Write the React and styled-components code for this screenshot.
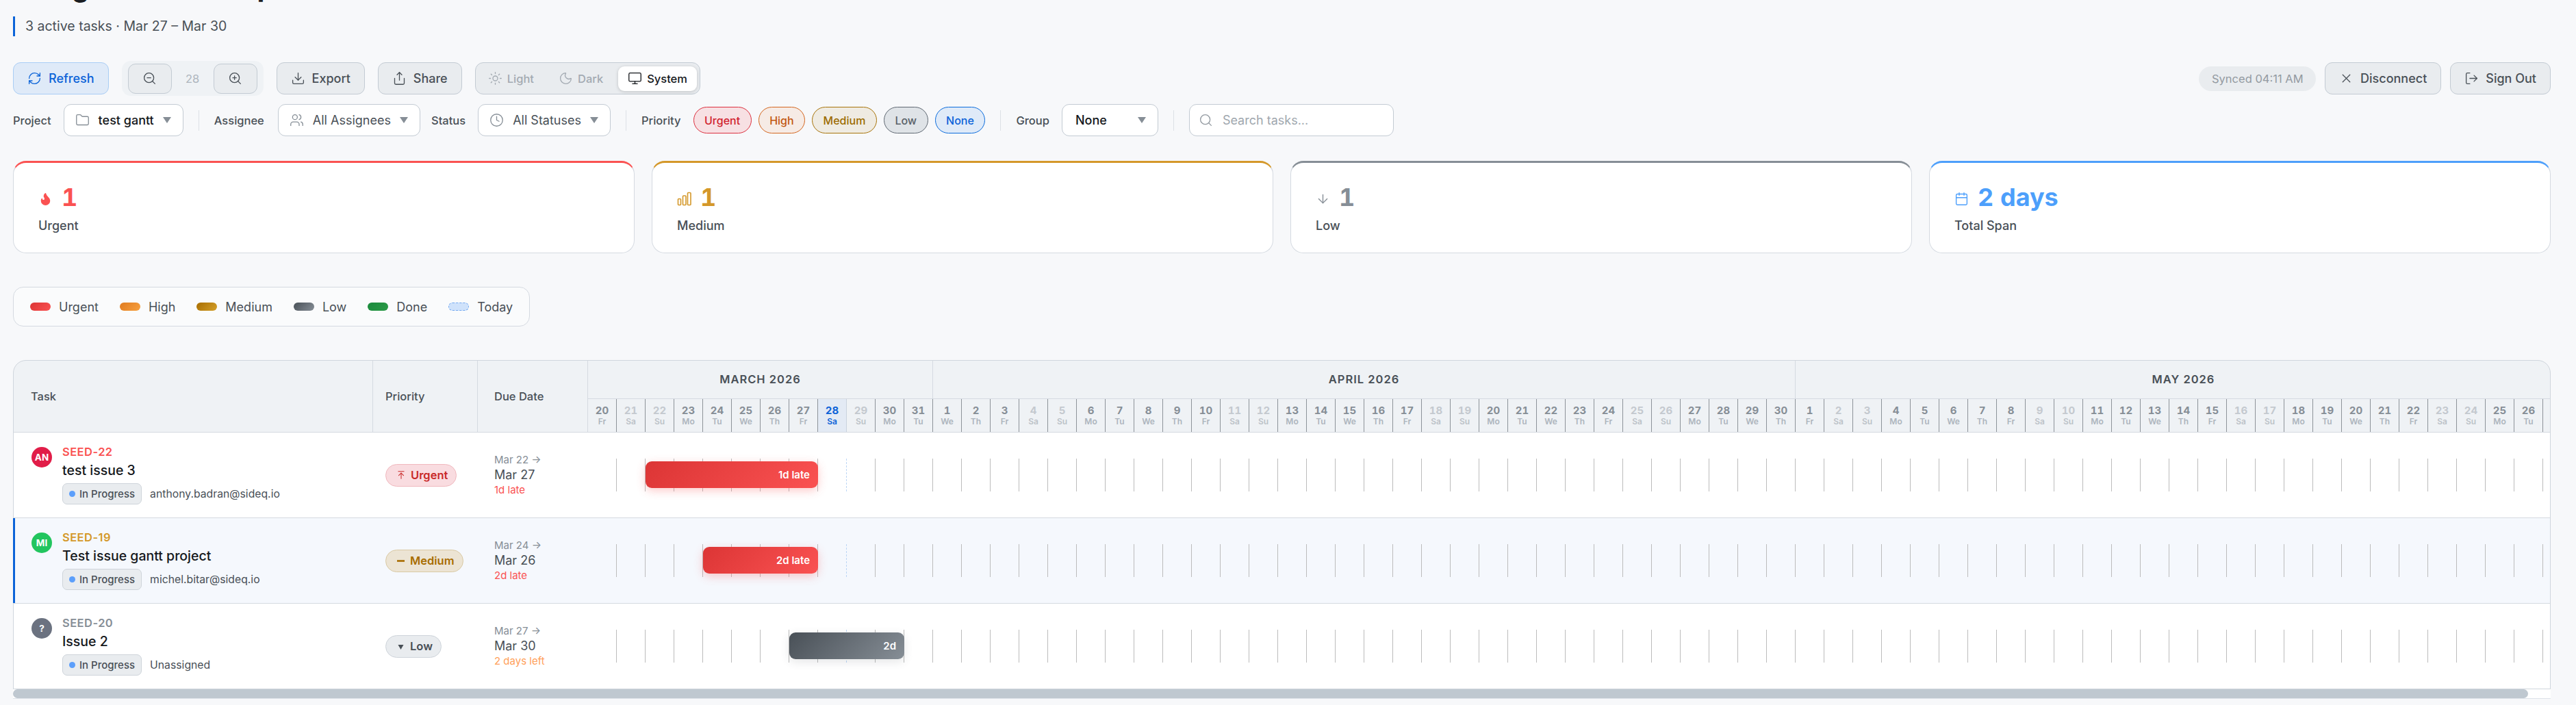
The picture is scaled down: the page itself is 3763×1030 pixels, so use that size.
import React from 'react';
import styled, { createGlobalStyle } from 'styled-components';
import {
  RefreshCw, ZoomIn, ZoomOut, Download, Share, Sun, Moon, Monitor, Folder, Users, Clock,
  Search, X, LogOut, Flame, ArrowDown, Calendar, ArrowUpToLine,
} from 'lucide-react';

const DAY_W = 42;

const Global = createGlobalStyle`
  html, body { margin: 0; padding: 0; overflow: hidden; height: 100%; background: #f7f8fa; }
  body { font-family: Inter, "Noto Sans", "Liberation Sans", sans-serif; color: #495057; }
  * { box-sizing: border-box; }
`;

const Page = styled.div`
  padding: 0 37px 0 19px;
`;
const Title = styled.h1`
  margin: -43px 0 19px;
  font-size: 40px;
  line-height: 48px;
  font-weight: 700;
  color: #1a1d21;
  white-space: nowrap;
`;
const Subtitle = styled.p`
  margin: 0;
  height: 29px;
  line-height: 29px;
  padding-left: 15px;
  border-left: 3px solid #0b63d8;
  font-size: 19.5px;
  color: #495057;
`;

const Toolbar = styled.div`
  display: flex;
  align-items: center;
  gap: 19px;
  height: 51px;
  margin-top: 36px;
`;
const Button = styled.button`
  display: inline-flex;
  align-items: center;
  gap: 10px;
  height: 47px;
  padding: 0 20px;
  font: 500 18px Inter, sans-serif;
  color: ${p => (p.$active ? '#0b63d8' : '#495057')};
  background: ${p => (p.$active ? '#dfeaf8' : '#e9ecef')};
  border: 1px solid ${p => (p.$active ? '#a9cdf5' : '#c3cbd3')};
  border-radius: 11px;
`;
const ZoomGroup = styled.div`
  display: flex;
  align-items: center;
  height: 51px;
  padding: 0 9px;
  background: #eff2f5;
  border-radius: 13px;
`;
const ZoomButton = styled.button`
  display: flex;
  align-items: center;
  justify-content: center;
  width: 64px;
  height: 44px;
  background: #e9ecef;
  border: 1px solid #c3cbd3;
  border-radius: 11px;
  color: #495057;
`;
const ZoomLevel = styled.span`
  width: 61px;
  text-align: center;
  font-size: 16.5px;
  color: #adb5bd;
`;
const ThemeGroup = styled.div`
  display: flex;
  align-items: center;
  gap: 8px;
  height: 47px;
  padding: 0 4px;
  background: #e9ecef;
  border: 1px solid #c3cbd3;
  border-radius: 12px;
`;
const ThemeItem = styled.div`
  display: flex;
  align-items: center;
  gap: 7px;
  height: 36px;
  padding: 0 14px;
  font-size: 16.5px;
  font-weight: 500;
  color: ${p => (p.$active ? '#15181c' : '#a3aab2')};
  background: ${p => (p.$active ? '#fff' : 'transparent')};
  border-radius: 9px;
  box-shadow: ${p => (p.$active ? '0 1px 5px rgba(0,0,0,.18)' : 'none')};
`;
const RightTools = styled.div`
  display: flex;
  align-items: center;
  gap: 13px;
  margin-left: auto;
`;
const SyncPill = styled.span`
  display: flex;
  align-items: center;
  height: 36px;
  padding: 0 18.5px;
  font-size: 16.5px;
  color: #939aa1;
  background: #e9ecef;
  border-radius: 18px;
`;

const FilterRow = styled.div`
  display: flex;
  align-items: center;
  height: 47px;
  margin-top: 12px;
`;
const FilterGroup = styled.div`
  display: flex;
  align-items: center;
  gap: ${p => p.$gap || 18}px;
  margin-left: ${p => p.$ml || 0}px;
`;
const FilterLabel = styled.span`
  font-size: 16.5px;
  font-weight: 450;
  color: #495057;
`;
const Select = styled.div`
  display: flex;
  align-items: center;
  gap: 13px;
  height: 47px;
  min-width: ${p => p.$minW || 0}px;
  padding: 0 17px 0 ${p => p.$pl || 16}px;
  font-size: 18px;
  font-weight: ${p => (p.$strong ? 500 : 400)};
  color: ${p => (p.$strong ? '#15181c' : '#495057')};
  background: #fff;
  border: 1px solid #c3cbd3;
  border-radius: 11px;
  svg { flex: none; color: #868e96; }
`;
const CaretMark = styled.svg`
  margin-left: auto;
`;
const Caret = () => (
  <CaretMark width="12" height="9" viewBox="0 0 12 9"><path d="M0 0h12L6 9z" fill="#868e96" /></CaretMark>
);
const Divider = styled.span`
  width: 1px;
  height: 30px;
  margin: 0 22px;
  background: #dde1e6;
`;
const FilterChips = styled.div`
  display: flex;
  gap: 10px;
`;
const FilterChip = styled.span`
  display: flex;
  align-items: center;
  height: 39px;
  padding: 0 15.5px;
  font-size: 16px;
  font-weight: 500;
  color: ${p => p.$fg};
  background: ${p => p.$bg};
  border: 1px solid ${p => p.$bd};
  border-radius: 20px;
`;
const SearchBox = styled.label`
  display: flex;
  align-items: center;
  gap: 14px;
  width: 299px;
  height: 47px;
  padding: 0 13px;
  background: #fff;
  border: 1px solid #c3cbd3;
  border-radius: 11px;
  color: #939aa1;
`;
const SearchInput = styled.input`
  flex: 1;
  min-width: 0;
  border: 0;
  outline: 0;
  padding: 0;
  background: transparent;
  font: 400 18px Inter, sans-serif;
  &::placeholder { color: #a0a7ae; opacity: 1; }
`;

const Stats = styled.div`
  display: grid;
  grid-template-columns: repeat(4, 1fr);
  gap: 25px;
  margin-top: 36px;
`;
const StatCard = styled.div`
  height: 135px;
  padding: 28px 36px 0;
  background: #fff;
  border: 1px solid #d5dae1;
  border-top: 3px solid ${p => p.$c};
  border-radius: 19px;
`;
const StatValue = styled.div`
  display: flex;
  align-items: center;
  gap: 13px;
  height: 44px;
  font-size: 36px;
  line-height: 44px;
  font-weight: 700;
  font-variant-numeric: tabular-nums;
  color: ${p => p.$c};
  svg { flex: none; margin-top: 5px; }
`;
const StatLabel = styled.div`
  margin-top: 8px;
  font-size: 18px;
  line-height: 24px;
  font-weight: 500;
  color: #495057;
`;

const Legend = styled.div`
  display: inline-flex;
  align-items: center;
  gap: 31px;
  height: 58px;
  margin-top: 49px;
  padding: 0 24px;
  background: #fafbfc;
  border: 1px solid #d5dae1;
  border-radius: 15px;
`;
const LegendItem = styled.span`
  display: flex;
  align-items: center;
  gap: 12px;
  font-size: 18px;
  color: #495057;
`;
const Swatch = styled.i`
  display: block;
  width: 30px;
  height: 12px;
  border-radius: 6px;
  background: ${p => p.$bg};
  border: ${p => p.$bd || 'none'};
`;
const LegendRow = styled.div`
  display: flex;
`;

const TableCard = styled.div`
  position: relative;
  margin-top: 49px;
  border-bottom: 1px solid #dde2e8;
  &::after {
    content: '';
    position: absolute;
    inset: 0 0 13px 0;
    z-index: 1;
    border: 1px solid #d0d6dd;
    border-radius: 19px 19px 0 0;
    pointer-events: none;
  }
`;
const Scroller = styled.div`
  overflow: hidden;
  border-radius: 19px 19px 0 0;
  background: #fff;
`;
const ScrollTrack = styled.div`
  height: 13px;
  background: #fff;
`;
const ScrollThumb = styled.div`
  height: 13px;
  border-radius: 7px;
  background: #bfc8d0;
`;
const Inner = styled.div`
  width: ${p => p.$w}px;
`;
const HeaderRow = styled.div`
  display: flex;
  height: 106px;
  background: #eff2f5;
  border-bottom: 1px solid #d5dae1;
`;
const HeadCell = styled.div`
  flex: none;
  display: flex;
  align-items: center;
  width: ${p => p.$w}px;
  padding-left: ${p => p.$pl}px;
  border-right: 1px solid #d5dae1;
  font-size: 16.5px;
  font-weight: 450;
  color: #495057;
`;
const TimelineHead = styled.div`
  flex: none;
  display: flex;
  flex-direction: column;
`;
const MonthRow = styled.div`
  display: flex;
  height: 57px;
  border-bottom: 1px solid #d5dae1;
`;
const MonthCell = styled.div`
  flex: none;
  display: flex;
  align-items: center;
  justify-content: center;
  width: ${p => p.$days * DAY_W}px;
  border-right: 1px solid #d5dae1;
  font-size: 16.5px;
  font-weight: 600;
  letter-spacing: 1px;
  color: #495057;
`;
const DayRow = styled.div`
  display: flex;
  height: 48px;
`;
const DayCell = styled.div`
  flex: none;
  display: flex;
  flex-direction: column;
  align-items: center;
  justify-content: center;
  width: ${DAY_W}px;
  padding-bottom: 2px;
  border-right: 1px solid #8d9399;
  background: ${p => (p.$today ? '#e3eaf4' : 'transparent')};
  border-right-color: ${p => (p.$today ? '#c9d3de' : '#8d9399')};
`;
const DayNum = styled.span`
  font-size: 15px;
  line-height: 19px;
  font-weight: 700;
  font-variant-numeric: tabular-nums;
  color: ${p => (p.$today ? '#0b63d8' : p.$weekend ? '#c4c9cf' : '#868e96')};
`;
const DayName = styled.span`
  font-size: 12px;
  line-height: 14px;
  font-weight: 600;
  color: ${p => (p.$today ? '#0b63d8' : p.$weekend ? '#bcc2c8' : '#adb5bd')};
`;

const Row = styled.div`
  position: relative;
  display: flex;
  align-items: stretch;
  height: 125px;
  background: ${p => (p.$selected ? '#f5f8fd' : '#fff')};
  border-bottom: 1px solid #d5dae1;
  &::before {
    content: '';
    display: ${p => (p.$selected ? 'block' : 'none')};
    position: absolute;
    left: 0;
    top: 0;
    bottom: 0;
    z-index: 2;
    width: 3px;
    background: #0b63d8;
  }
`;
const TaskCell = styled.div`
  flex: none;
  display: flex;
  align-items: center;
  gap: 15px;
  width: 526px;
  padding-left: 27px;
`;
const Avatar = styled.span`
  flex: none;
  display: flex;
  align-items: center;
  justify-content: center;
  align-self: flex-start;
  width: 30px;
  height: 30px;
  margin-top: 21px;
  border-radius: 50%;
  background: ${p => p.$bg};
  color: #fff;
  font-size: 13.5px;
  font-weight: 700;
`;
const TaskBody = styled.div`
  display: flex;
  flex-direction: column;
  margin-top: -2px;
`;
const TaskKey = styled.span`
  font-size: 16.5px;
  line-height: 22px;
  font-weight: 600;
  letter-spacing: 0.45px;
  color: ${p => p.$c};
`;
const TaskTitle = styled.span`
  margin-top: 3px;
  font-size: 19.5px;
  line-height: 26px;
  font-weight: 500;
  color: #15181c;
`;
const TaskMeta = styled.div`
  display: flex;
  align-items: center;
  gap: 12px;
  margin-top: 6px;
  font-size: 15.75px;
  color: #495057;
`;
const StatusBadge = styled.span`
  display: flex;
  align-items: center;
  gap: 6px;
  height: 31px;
  padding: 0 9px;
  background: #e9ecef;
  border: 1px solid #ced4da;
  border-radius: 7px;
  font-size: 15px;
  font-weight: 500;
  color: #495057;
`;
const StatusDot = styled.i`
  width: 9px;
  height: 9px;
  border-radius: 50%;
  background: #5c9ffb;
`;
const PriorityCell = styled.div`
  flex: none;
  display: flex;
  align-items: center;
  width: 153px;
  padding-left: 18px;
`;
const PriorityChip = styled.span`
  display: flex;
  align-items: center;
  gap: 7px;
  height: 33px;
  padding: 0 12px 0 15px;
  font-size: 16.5px;
  font-weight: 600;
  color: ${p => p.$fg};
  background: ${p => p.$bg};
  border: 1px solid ${p => p.$bd};
  border-radius: 17px;
`;
const DueCell = styled.div`
  flex: none;
  display: flex;
  flex-direction: column;
  justify-content: center;
  width: 161px;
  padding-left: 24px;
  line-height: 22px;
`;
const DueFrom = styled.span`
  font-size: 15px;
  color: #868e96;
`;
const DueTo = styled.span`
  font-size: 18px;
  font-weight: 400;
  color: #495057;
`;
const DueNote = styled.span`
  font-size: 15px;
  color: ${p => p.$c};
`;
const Track = styled.div`
  position: relative;
  flex: none;
  align-self: center;
  display: flex;
  height: 48px;
`;
const GridDay = styled.span`
  flex: none;
  width: ${DAY_W}px;
  border-right: 1px ${p => (p.$today ? 'dashed #bcd6f5' : 'solid #bcbcbc')};
`;
const Bar = styled.div`
  position: absolute;
  top: 4px;
  left: ${p => p.$start * DAY_W}px;
  width: ${p => p.$span * DAY_W}px;
  height: 39px;
  display: flex;
  align-items: center;
  justify-content: flex-end;
  padding-right: 12px;
  border-radius: 9px;
  background: ${p => p.$bg};
  box-shadow: ${p => p.$shadow};
  color: #fff;
  font-size: 15px;
  font-weight: 600;
`;

const BarsIcon = () => (
  <svg width="21" height="21" viewBox="0 0 21 21" fill="none" stroke="currentColor" strokeWidth="1.6">
    <rect x="1.5" y="10.5" width="4" height="9" rx="1" />
    <rect x="8.5" y="6" width="4.5" height="13.5" rx="1" />
    <rect x="15.5" y="1.5" width="4.5" height="18" rx="1" />
  </svg>
);
const TinyTriangle = () => (
  <svg width="13" height="13" viewBox="0 0 13 13"><path d="M2.5 4h8l-4 7z" fill="#495057" /></svg>
);
const DashMark = () => (
  <svg width="13" height="13" viewBox="0 0 13 13"><rect x="1" y="5.2" width="11" height="2.6" fill="#a86d00" /></svg>
);

const DAY_NAMES = ['Su', 'Mo', 'Tu', 'We', 'Th', 'Fr', 'Sa'];
const days = Array.from({ length: 69 }, (_, i) => {
  const d = new Date(2026, 2, 20 + i);
  return {
    num: d.getDate(),
    name: DAY_NAMES[d.getDay()],
    weekend: d.getDay() === 0 || d.getDay() === 6,
    today: i === 8,
    key: i,
  };
});
const months = [
  { label: 'MARCH 2026', days: 12 },
  { label: 'APRIL 2026', days: 30 },
  { label: 'MAY 2026', days: 27 },
];
const chips = [
  { t: 'Urgent', fg: '#d11f2f', bg: '#f7e0e3', bd: '#dc2f3e' },
  { t: 'High', fg: '#c2570f', bg: '#f6ebe5', bd: '#d4661f' },
  { t: 'Medium', fg: '#9c6b00', bg: '#efebe2', bd: '#a8740a' },
  { t: 'Low', fg: '#596169', bg: '#dfe3e7', bd: '#5f6872' },
  { t: 'None', fg: '#0b63d8', bg: '#dfeaf8', bd: '#0b6cdc' },
];
const legend = [
  { t: 'Urgent', bg: 'linear-gradient(135deg,#dc3535,#fa5252)' },
  { t: 'High', bg: 'linear-gradient(135deg,#e07b1f,#f7a140)' },
  { t: 'Medium', bg: 'linear-gradient(135deg,#a86d00,#d4a02a)' },
  { t: 'Low', bg: 'linear-gradient(135deg,#495057,#868e96)' },
  { t: 'Done', bg: 'linear-gradient(135deg,#1a8a3c,#2b9a47)' },
  { t: 'Today', bg: '#cfe2fb', bd: '1px dashed #74a9f0' },
];
const redBar = {
  bg: 'linear-gradient(135deg,#dc3535,#fa5252)',
  shadow: '0 4px 14px rgba(250,82,82,.3)',
};
const tasks = [
  {
    id: 'SEED-22', c: '#fa5252', av: 'AN', avBg: '#e11d48', title: 'test issue 3', who: 'anthony.badran@sideq.io',
    prio: 'Urgent', fg: '#c92a2a', bg: '#f9dce0', bd: '#f0b8be', icon: <ArrowUpToLine size={14} strokeWidth={1.8} />,
    from: 'Mar 22 →', to: 'Mar 27', note: '1d late', noteC: '#fa5252',
    bar: { start: 2, span: 6, label: '1d late', ...redBar },
  },
  {
    id: 'SEED-19', c: '#d4982a', av: 'MI', avBg: '#22c55e', title: 'Test issue gantt project', who: 'michel.bitar@sideq.io',
    prio: 'Medium', fg: '#a86d00', bg: '#ece4d4', bd: '#d9c9a3', icon: <DashMark />,
    from: 'Mar 24 →', to: 'Mar 26', note: '2d late', noteC: '#fa5252', selected: true,
    bar: { start: 4, span: 4, label: '2d late', ...redBar },
  },
  {
    id: 'SEED-20', c: '#868e96', av: '?', avBg: '#6b7280', title: 'Issue 2', who: 'Unassigned',
    prio: 'Low', fg: '#495057', bg: '#e9ecef', bd: '#ced4da', icon: <TinyTriangle />,
    from: 'Mar 27 →', to: 'Mar 30', note: '2 days left', noteC: '#ff9f5a',
    bar: { start: 7, span: 4, label: '2d', bg: 'linear-gradient(135deg,#495057,#868e96)', shadow: '0 4px 14px rgba(73,80,87,.14)' },
  },
];
const stats = [
  { c: '#fa5252', v: '1', l: 'Urgent', icon: <Flame size={21} fill="currentColor" strokeWidth={1.5} /> },
  { c: '#d4982a', v: '1', l: 'Medium', icon: <BarsIcon /> },
  { c: '#868e96', v: '1', l: 'Low', icon: <ArrowDown size={21} strokeWidth={1.6} /> },
  { c: '#4d9ffb', v: '2 days', l: 'Total Span', icon: <Calendar size={21} strokeWidth={1.6} /> },
];
const I = { size: 21, strokeWidth: 1.5 };

export default function App() {
  const totalW = 840 + days.length * DAY_W + 2;
  const viewW = 3707;
  return (
    <Page>
      <Global />
      <Title>Design Review Map</Title>
      <Subtitle>3 active tasks · Mar 27 – Mar 30</Subtitle>

      <Toolbar>
        <Button $active><RefreshCw {...I} />Refresh</Button>
        <ZoomGroup>
          <ZoomButton><ZoomOut {...I} /></ZoomButton>
          <ZoomLevel>28</ZoomLevel>
          <ZoomButton><ZoomIn {...I} /></ZoomButton>
        </ZoomGroup>
        <Button><Download {...I} />Export</Button>
        <Button><Share {...I} />Share</Button>
        <ThemeGroup>
          <ThemeItem><Sun {...I} />Light</ThemeItem>
          <ThemeItem><Moon {...I} />Dark</ThemeItem>
          <ThemeItem $active><Monitor {...I} />System</ThemeItem>
        </ThemeGroup>
        <RightTools>
          <SyncPill>Synced 04:11 AM</SyncPill>
          <Button><X {...I} />Disconnect</Button>
          <Button><LogOut {...I} />Sign Out</Button>
        </RightTools>
      </Toolbar>

      <FilterRow>
        <FilterGroup>
          <FilterLabel>Project</FilterLabel>
          <Select $strong><Folder {...I} />test gantt<Caret /></Select>
        </FilterGroup>
        <Divider />
        <FilterGroup $gap={20}>
          <FilterLabel>Assignee</FilterLabel>
          <Select><Users {...I} />All Assignees<Caret /></Select>
        </FilterGroup>
        <FilterGroup $ml={16}>
          <FilterLabel>Status</FilterLabel>
          <Select><Clock {...I} />All Statuses<Caret /></Select>
        </FilterGroup>
        <Divider />
        <FilterGroup>
          <FilterLabel>Priority</FilterLabel>
          <FilterChips>
            {chips.map(c => <FilterChip key={c.t} $fg={c.fg} $bg={c.bg} $bd={c.bd}>{c.t}</FilterChip>)}
          </FilterChips>
        </FilterGroup>
        <Divider />
        <FilterGroup>
          <FilterLabel>Group</FilterLabel>
          <Select $strong $minW={141} $pl={19}>None<Caret /></Select>
        </FilterGroup>
        <Divider />
        <SearchBox>
          <Search {...I} />
          <SearchInput placeholder="Search tasks..." />
        </SearchBox>
      </FilterRow>

      <Stats>
        {stats.map(s => (
          <StatCard key={s.l} $c={s.c}>
            <StatValue $c={s.c}>{s.icon}{s.v}</StatValue>
            <StatLabel>{s.l}</StatLabel>
          </StatCard>
        ))}
      </Stats>

      <LegendRow>
        <Legend>
          {legend.map(l => (
            <LegendItem key={l.t}><Swatch $bg={l.bg} $bd={l.bd} />{l.t}</LegendItem>
          ))}
        </Legend>
      </LegendRow>

      <TableCard>
        <Scroller>
          <Inner $w={totalW}>
            <HeaderRow>
              <HeadCell $w={526} $pl={26}>Task</HeadCell>
              <HeadCell $w={153} $pl={18}>Priority</HeadCell>
              <HeadCell $w={161} $pl={24}>Due Date</HeadCell>
              <TimelineHead>
                <MonthRow>
                  {months.map(m => <MonthCell key={m.label} $days={m.days}>{m.label}</MonthCell>)}
                </MonthRow>
                <DayRow>
                  {days.map(d => (
                    <DayCell key={d.key} $today={d.today}>
                      <DayNum $today={d.today} $weekend={d.weekend}>{d.num}</DayNum>
                      <DayName $today={d.today} $weekend={d.weekend}>{d.name}</DayName>
                    </DayCell>
                  ))}
                </DayRow>
              </TimelineHead>
            </HeaderRow>
            {tasks.map(t => (
              <Row key={t.id} $selected={t.selected}>
                <TaskCell>
                  <Avatar $bg={t.avBg}>{t.av}</Avatar>
                  <TaskBody>
                    <TaskKey $c={t.c}>{t.id}</TaskKey>
                    <TaskTitle>{t.title}</TaskTitle>
                    <TaskMeta>
                      <StatusBadge><StatusDot />In Progress</StatusBadge>
                      {t.who}
                    </TaskMeta>
                  </TaskBody>
                </TaskCell>
                <PriorityCell>
                  <PriorityChip $fg={t.fg} $bg={t.bg} $bd={t.bd}>{t.icon}{t.prio}</PriorityChip>
                </PriorityCell>
                <DueCell>
                  <DueFrom>{t.from}</DueFrom>
                  <DueTo>{t.to}</DueTo>
                  <DueNote $c={t.noteC}>{t.note}</DueNote>
                </DueCell>
                <Track>
                  {days.map(d => <GridDay key={d.key} $today={d.today} />)}
                  <Bar $start={t.bar.start} $span={t.bar.span} $bg={t.bar.bg} $shadow={t.bar.shadow}>{t.bar.label}</Bar>
                </Track>
              </Row>
            ))}
          </Inner>
        </Scroller>
        <ScrollTrack>
          <ScrollThumb style={{ width: `${(viewW / totalW) * 100}%` }} />
        </ScrollTrack>
      </TableCard>
    </Page>
  );
}
